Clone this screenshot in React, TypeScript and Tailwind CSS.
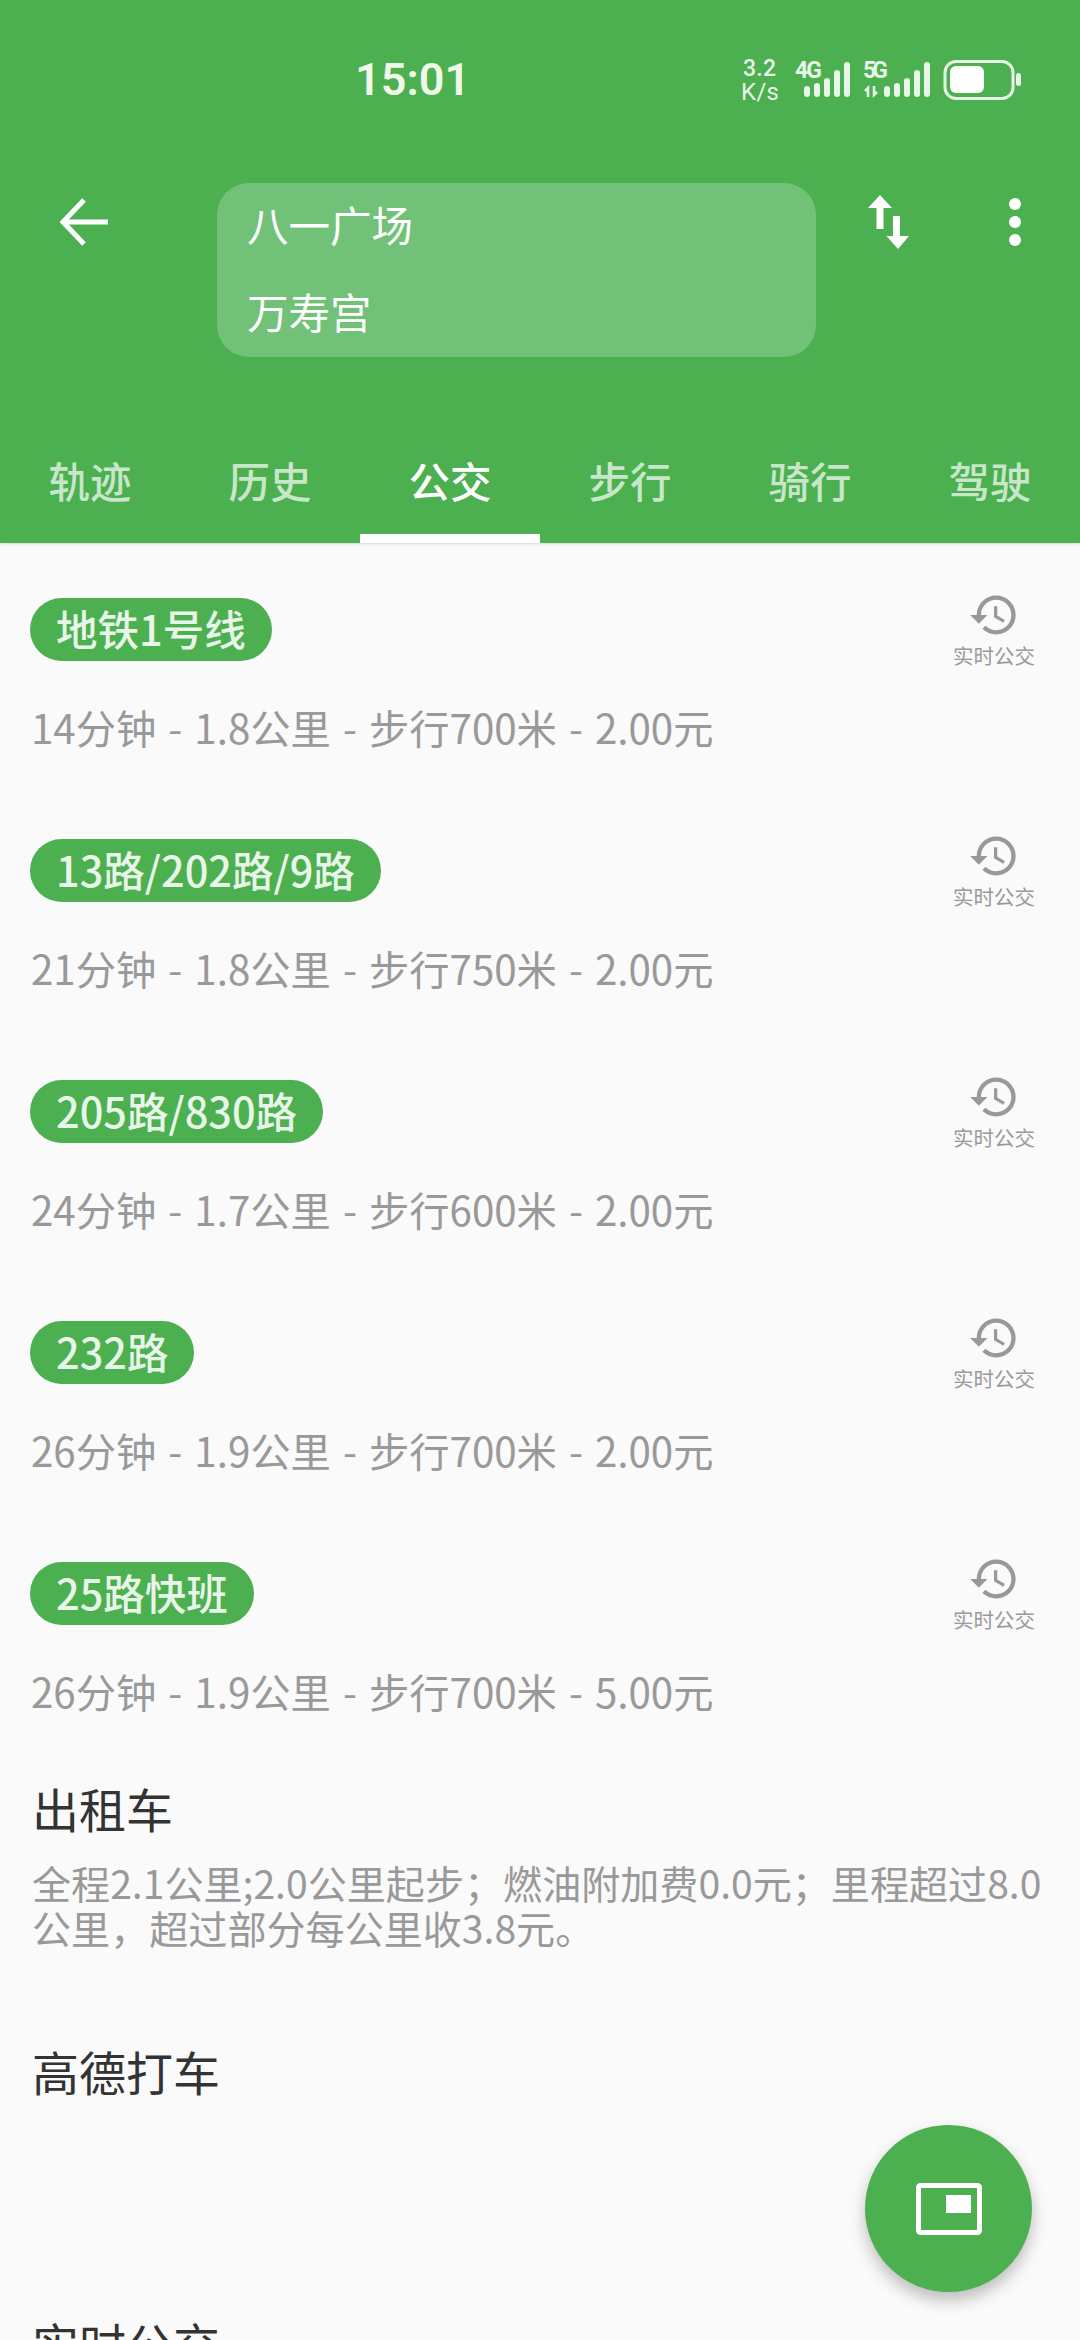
import React from 'react';

const CJK = "font-['Noto_Sans_CJK_SC','Noto_Sans',sans-serif]";

const routes = [
  { name: '地铁1号线', info: '14分钟 - 1.8公里 - 步行700米 - 2.00元' },
  { name: '13路/202路/9路', info: '21分钟 - 1.8公里 - 步行750米 - 2.00元' },
  { name: '205路/830路', info: '24分钟 - 1.7公里 - 步行600米 - 2.00元' },
  { name: '232路', info: '26分钟 - 1.9公里 - 步行700米 - 2.00元' },
  { name: '25路快班', info: '26分钟 - 1.9公里 - 步行700米 - 5.00元' },
];

const tabs = ['轨迹', '历史', '公交', '步行', '骑行', '驾驶'];

const Bars: React.FC<{ x: number }> = ({ x }) => (
  <g fill="#E8F5E9">
    {[86, 83, 78, 70, 62].map((top, i) => (
      <rect key={i} x={x + i * 10} y={top} width="6" height={97 - top} rx="3" />
    ))}
  </g>
);

const StatusIcons = () => (
  <svg viewBox="740 55 284 50" className="w-[284px] h-[50px]" fill="#E8F5E9">
    <text x="743" y="76" fontSize="23" fontFamily="Roboto" fontWeight="500" textLength="33">3.2</text>
    <text x="741" y="100" fontSize="24" fontFamily="Roboto" textLength="38">K/s</text>
    <text x="795" y="78" fontSize="23" fontFamily="Roboto" fontWeight="700" textLength="27">4G</text>
    <Bars x={804} />
    <text x="863" y="78" fontSize="23" fontFamily="Roboto" fontWeight="700" textLength="25">5G</text>
    <path d="M868 97v-9l-3 3M874 86v9l3-3" stroke="#E8F5E9" strokeWidth="2.5" fill="none" />
    <Bars x={884} />
    <rect x="945" y="61.5" width="68" height="37" rx="11" fill="none" stroke="#E8F5E9" strokeWidth="3" />
    <rect x="950" y="66" width="34" height="27" rx="6" fill="#fff" />
    <rect x="1016" y="73" width="5" height="13" rx="2.5" />
  </svg>
);

const SwapIcon = () => (
  <svg viewBox="0 0 44 56" className="w-[44px] h-[56px]" fill="#fff">
    <path d="M13 0l12 13h-8.5v21h-7V13H1z" />
    <path d="M26 21h7v20h9L31 54 19.500 41H26z" />
  </svg>
);

const HistoryIcon = () => (
  <svg viewBox="0 0 24 24" className="w-[52px] h-[52px]" fill="#999999">
    <path d="M13 3a9 9 0 0 0-9 9H1l3.89 3.89.07.14L9 12H6c0-3.87 3.13-7 7-7s7 3.130 7 7-3.130 7-7 7c-1.930 0-3.680-.79-4.940-2.060l-1.420 1.420A8.954 8.954 0 0 0 13 21a9 9 0 0 0 0-18zm-1 5v5l4.280 2.540.72-1.210-3.500-2.080V8H12z" />
  </svg>
);

const RouteRow: React.FC<{ name: string; info: string }> = ({ name, info }) => (
  <div className="relative h-[241px] pl-[30px]">
    <div className="flex">
      <span className="h-[63px] rounded-full bg-[#4CAF50] px-[26px] text-[41.500px] font-medium leading-[60px] text-[#E8F5E9]">
        {name}
      </span>
    </div>
    <p className="mt-[36px] pl-[1px] text-[40.300px] leading-[60px] text-[#999999] [word-spacing:3px]">{info}</p>
    <div className="absolute right-[43px] top-[-9px] flex w-[86px] flex-col items-center">
      <HistoryIcon />
      <span className="text-[20.500px] leading-[28px] text-[#999999]">实时公交</span>
    </div>
  </div>
);

export default function App() {
  return (
    <div className={`relative h-[2340px] w-[1080px] overflow-hidden bg-[#FAFAFA] ${CJK}`}>
      <header className="h-[543px] bg-[#4CAF50] shadow-sm">
        <div className="flex h-[160px] items-center">
          <span className="ml-[355px] mb-[2px] w-[385px] font-['Roboto',sans-serif] text-[45px] font-semibold leading-none text-[#F1F8E9]">
            15:01
          </span>
          <StatusIcons />
        </div>
        <div className="flex h-[197px] items-start pt-[23px]">
          <button className="ml-[60px] mt-[15px] h-[48px] w-[50px]">
            <svg viewBox="0 0 50 48" className="h-[48px] w-[50px]" fill="none" stroke="#fff" strokeWidth="5">
              <path d="M48 24H4M24 2L3 24l21 22" />
            </svg>
          </button>
          <div className="ml-[107px] flex h-[174px] w-[599px] flex-col rounded-[32px] bg-[#72C178] pl-[30px] text-[41.500px] leading-[87px] text-white">
            <span className="mt-[-2px]">八一广场</span>
            <span>万寿宫</span>
          </div>
          <div className="ml-[51px] mt-[12px]">
            <SwapIcon />
          </div>
          <div className="ml-[98px] mt-[15px] flex flex-col gap-[6px]">
            <span className="h-[12px] w-[12px] rounded-full bg-white" />
            <span className="h-[12px] w-[12px] rounded-full bg-white" />
            <span className="h-[12px] w-[12px] rounded-full bg-white" />
          </div>
        </div>
        <nav className="flex h-[186px]">
          {tabs.map((t) => (
            <div key={t} className="flex h-[186px] w-[180px] flex-col justify-end">
              {t === '公交' ? (
                <>
                  <span className="mb-[24px] text-center text-[41.500px] font-medium leading-[60px] text-white">{t}</span>
                  <span className="h-[9px] bg-white" />
                </>
              ) : (
                <span className="mb-[33px] text-center text-[41.500px] font-medium leading-[60px] text-[#C8E6C9]">{t}</span>
              )}
            </div>
          ))}
        </nav>
      </header>

      <main className="pt-[55px]">
        {routes.map((r) => (
          <RouteRow key={r.name} name={r.name} info={r.info} />
        ))}
        <section className="mt-[-25px] pl-[32px]">
          <h2 className="text-[47px] leading-[60px] text-[#333333]">出租车</h2>
          <p className="mt-[22px] w-[1020px] text-[39.100px] leading-[45px] text-[#999999]">
            全程2.1公里;2.0公里起步；燃油附加费0.0元；里程超过8.0公里，超过部分每公里收3.8元。
          </p>
          <h2 className="mt-[91px] text-[47px] leading-[60px] text-[#333333]">高德打车</h2>
          <h2 className="mt-[212px] text-[47px] leading-[60px] text-[#333333]">实时公交</h2>
        </section>
      </main>

      <button className="absolute left-[865px] top-[2125px] flex h-[167px] w-[167px] items-center justify-center rounded-full bg-[#4CAF50] shadow-[0_8px_16px_rgba(0,0,0,0.25)]">
        <svg viewBox="0 0 66 52" className="h-[52px] w-[66px]" fill="none">
          <rect x="2.500" y="2.500" width="61" height="47" rx="2" stroke="#fff" strokeWidth="5" />
          <rect x="30" y="12" width="25" height="18" fill="#fff" />
        </svg>
      </button>
    </div>
  );
}
